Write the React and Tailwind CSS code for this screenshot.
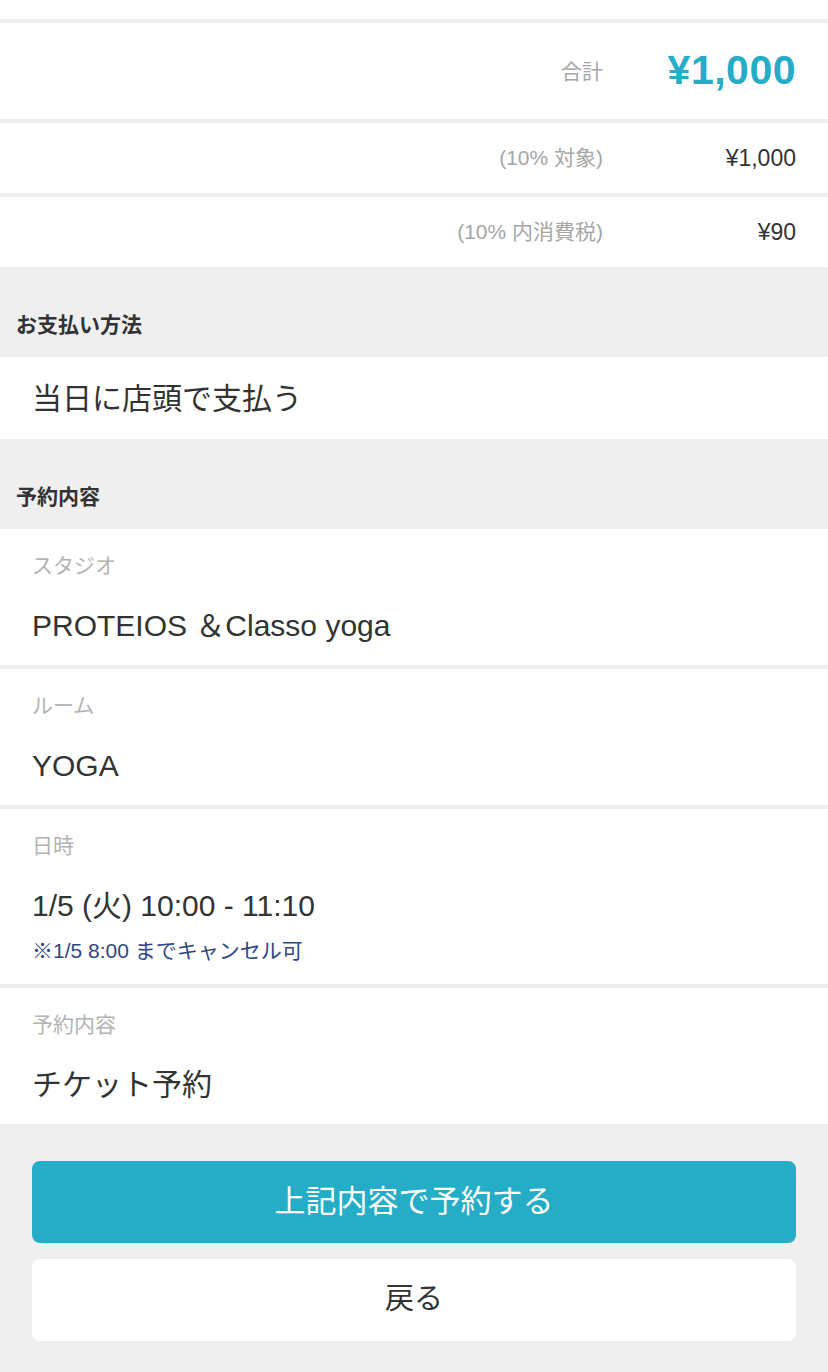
import React from "react";

const FONT = { fontFamily: '"Liberation Sans", "Noto Sans CJK JP", sans-serif' };

const AmountRow = ({ label, value, total }) => (
  <div
    className={`flex items-center justify-end bg-white pr-8 border-t-4 border-[#eeeeee] ${
      total ? "h-[100px]" : "h-[74px]"
    }`}
  >
    <span className={`text-[21px] text-[#a6a6a6] ${total ? "pt-[2px]" : ""}`}>{label}</span>
    <span
      className={`w-[193px] text-right ${
        total ? "text-[41px] font-bold tracking-[0.5px] text-[#25adc8]" : "text-[23px] text-[#333]"
      }`}
    >
      {value}
    </span>
  </div>
);

const SectionHeader = ({ children }) => (
  <div className="bg-[#efefef] pl-4 pt-[44px] pb-[18px] text-[21px] leading-[28px] font-bold text-[#333]">
    {children}
  </div>
);

const Field = ({ label, value, note, first }) => (
  <div
    className={`bg-white pl-8 pt-[22px] ${note ? "pb-[18px]" : "pb-[19px]"} ${
      first ? "" : "border-t-4 border-[#eeeeee]"
    }`}
  >
    <div className="text-[21px] leading-[30px] text-[#b3b3b3]">{label}</div>
    <div className="mt-[25px] text-[30px] leading-[40px] text-[#333]">{value}</div>
    {note && <div className="mt-[10px] text-[21px] leading-[30px] text-[#2f4785]">{note}</div>}
  </div>
);

export default function App() {
  return (
    <div className="w-[828px] min-h-[1372px] bg-[#efefef] text-[#333]" style={FONT}>
      <div className="h-[19px] bg-white" />
      <AmountRow label="合計" value="¥1,000" total />
      <AmountRow label="(10% 対象)" value="¥1,000" />
      <AmountRow label="(10% 内消費税)" value="¥90" />

      <SectionHeader>お支払い方法</SectionHeader>
      <div className="flex h-[82px] items-center bg-white pl-8 text-[30px] text-[#333]">
        当日に店頭で支払う
      </div>

      <SectionHeader>予約内容</SectionHeader>
      <Field label="スタジオ" value="PROTEIOS ＆Classo yoga" first />
      <Field label="ルーム" value="YOGA" />
      <Field label="日時" value="1/5 (火) 10:00 - 11:10" note="※1/5 8:00 までキャンセル可" />
      <Field label="予約内容" value="チケット予約" />

      <div className="flex flex-col gap-4 px-8 pt-[37px] pb-8">
        <button className="h-[82px] rounded-lg bg-[#25adc8] text-[31px] text-white">
          上記内容で予約する
        </button>
        <button className="h-[82px] rounded-lg bg-white text-[29px] text-[#333]">戻る</button>
      </div>
    </div>
  );
}
